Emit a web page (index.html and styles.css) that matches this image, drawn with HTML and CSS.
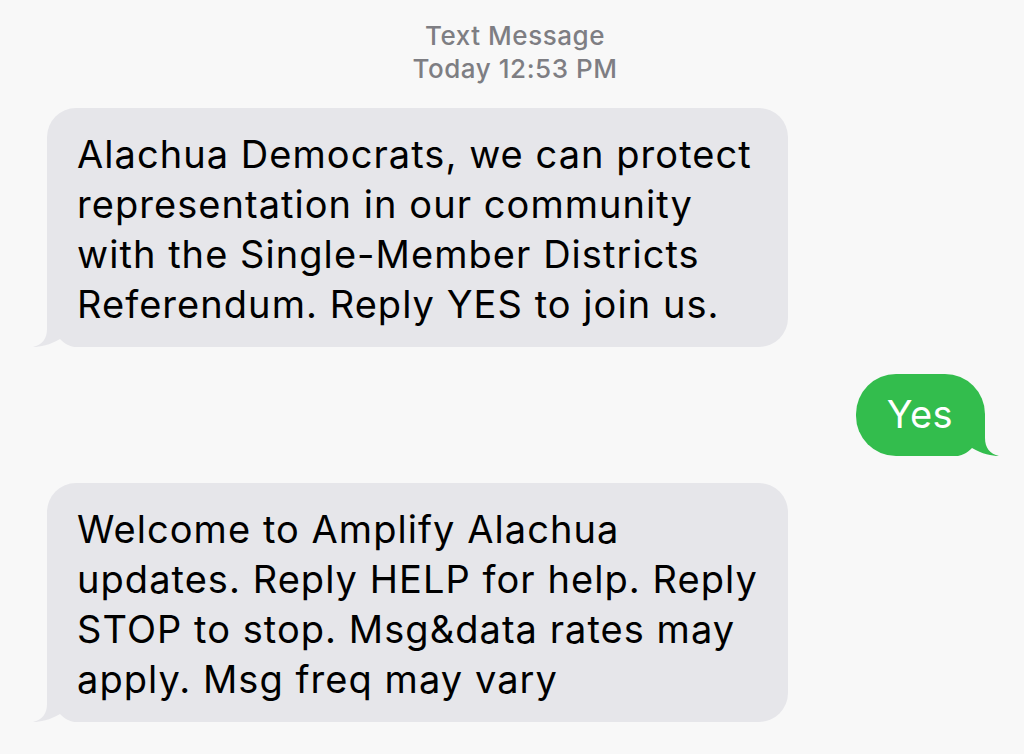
FILE: index.html
```
<!DOCTYPE html>
<html lang="en">
<head>
<meta charset="utf-8">
<title>Text Message</title>
<link rel="stylesheet" href="styles.css">
</head>
<body>
<main class="screen">
  <header class="stamp">
    <div class="stamp-type">Text Message</div>
    <div class="stamp-time">Today 12:53 PM</div>
  </header>
  <section class="thread">
    <div class="bubble in">
      Alachua Democrats, we can protect<br>representation in our community<br>with the Single-Member Districts<br>Referendum. Reply YES to join us.
      <svg class="tail" viewBox="0 0 50 32" width="50" height="32" aria-hidden="true"><path class="tail-fill" d="M15,0 L15,14 C15,24 10,30 1,32 L15,32 Z"/><path class="tail-cut" d="M0,32 L1,32 C8,32 18,30 28,24 C33,29 37,31 42,32 Z"/></svg>
    </div>
    <div class="bubble out">
      Yes
      <svg class="tail" viewBox="0 0 50 32" width="50" height="32" aria-hidden="true"><path class="tail-fill" d="M15,0 L15,14 C15,24 10,30 1,32 L15,32 Z"/><path class="tail-cut" d="M0,32 L1,32 C8,32 18,30 28,24 C33,29 37,31 42,32 Z"/></svg>
    </div>
    <div class="bubble in">
      Welcome to Amplify Alachua<br>updates. Reply HELP for help. Reply<br>STOP to stop. Msg&amp;data rates may<br>apply. Msg freq may vary
      <svg class="tail" viewBox="0 0 50 32" width="50" height="32" aria-hidden="true"><path class="tail-fill" d="M15,0 L15,14 C15,24 10,30 1,32 L15,32 Z"/><path class="tail-cut" d="M0,32 L1,32 C8,32 18,30 28,24 C33,29 37,31 42,32 Z"/></svg>
    </div>
  </section>
</main>
</body>
</html>
```
FILE: styles.css
```
html, body {
  margin: 0;
  padding: 0;
  background: #f8f8f8;
}

.screen {
  width: 1024px;
  height: 754px;
  overflow: hidden;
  font-family: Inter, "Liberation Sans", Arial, sans-serif;
  color: #000;
}

.stamp {
  padding-top: 19px;
  padding-left: 6px;
  text-align: center;
  color: #7e7e83;
  font-size: 26px;
  line-height: 33px;
  font-weight: 500;
  letter-spacing: 0.55px;
}

.thread {
  display: flex;
  flex-direction: column;
  gap: 27px;
  padding: 23px 39px 0 47px;
}

.bubble {
  position: relative;
  font-size: 38px;
  line-height: 50px;
  letter-spacing: 1.05px;
}

.bubble.in {
  align-self: flex-start;
  width: 741px;
  box-sizing: border-box;
  padding: 21px 10px 18px 30px;
  background: #e6e6ea;
  border-radius: 29px 29px 29px 0;
  --tail: #e6e6ea;
}

.bubble.out {
  align-self: flex-end;
  padding: 15px 32px 17px 31px;
  background: #33bd4d;
  color: #fff;
  letter-spacing: 0.4px;
  border-radius: 40px 40px 0 40px;
  --tail: #33bd4d;
}

.tail {
  position: absolute;
  bottom: 0;
  display: block;
}

.in .tail {
  left: -15px;
}

.out .tail {
  right: -15px;
  transform: scaleX(-1);
}

.tail-fill {
  fill: var(--tail);
}

.tail-cut {
  fill: #f8f8f8;
}
```
